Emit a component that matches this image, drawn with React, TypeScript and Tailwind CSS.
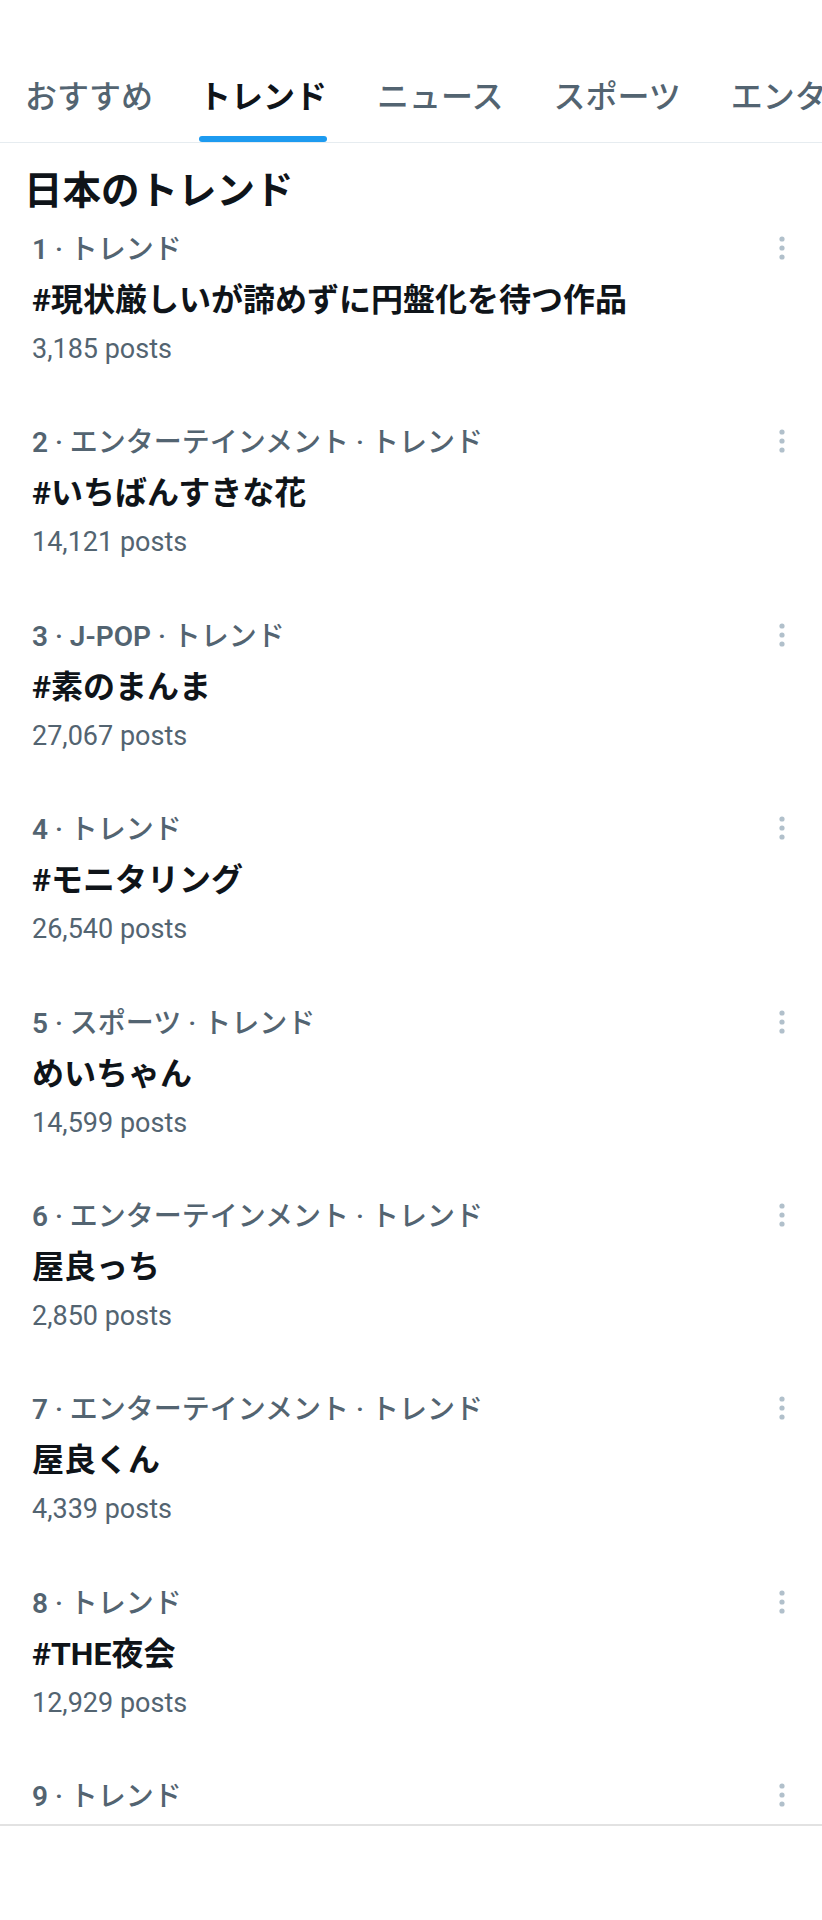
const tabs = ["おすすめ", "トレンド", "ニュース", "スポーツ", "エンターテインメント"];

const trends = [
  { rank: "1", cats: ["トレンド"], name: "#現状厳しいが諦めずに円盤化を待つ作品", posts: "3,185 posts" },
  { rank: "2", cats: ["エンターテインメント", "トレンド"], name: "#いちばんすきな花", posts: "14,121 posts" },
  { rank: "3", cats: ["J-POP", "トレンド"], name: "#素のまんま", posts: "27,067 posts" },
  { rank: "4", cats: ["トレンド"], name: "#モニタリング", posts: "26,540 posts" },
  { rank: "5", cats: ["スポーツ", "トレンド"], name: "めいちゃん", posts: "14,599 posts" },
  { rank: "6", cats: ["エンターテインメント", "トレンド"], name: "屋良っち", posts: "2,850 posts" },
  { rank: "7", cats: ["エンターテインメント", "トレンド"], name: "屋良くん", posts: "4,339 posts" },
  { rank: "8", cats: ["トレンド"], name: "#THE夜会", posts: "12,929 posts" },
  { rank: "9", cats: ["トレンド"], name: "", posts: "" },
];

const MoreIcon = () => (
  <svg width="6" height="24" viewBox="0 0 6 24" className="shrink-0">
    <circle cx="3" cy="3" r="2.6" fill="#b1c0cb" />
    <circle cx="3" cy="12" r="2.6" fill="#b1c0cb" />
    <circle cx="3" cy="21" r="2.6" fill="#b1c0cb" />
  </svg>
);

interface TrendItemProps {
  rank: string;
  cats: string[];
  name: string;
  posts: string;
}

const TrendItem = ({ rank, cats, name, posts }: TrendItemProps) => {
  return (
    <div className="shrink-0 pl-[32px] pr-[37px] pt-[17px] pb-[41.4px]">
      <div className="flex items-center justify-between h-[36px]">
        <span className="text-[28px] leading-[36px] font-medium text-[#536471] whitespace-nowrap">
          <span className="font-semibold">{rank}</span>
          {cats.map((c) => (
            <span key={c}>
              {" · "}
              <span className={c === "J-POP" ? "font-semibold" : ""}>{c}</span>
            </span>
          ))}
        </span>
        <div className="-mt-[4px]">
          <MoreIcon />
        </div>
      </div>
      {name && (
        <>
          <h3 className="mt-[7px] text-[32px] leading-[50px] font-bold text-[#0f1419] whitespace-nowrap">{name}</h3>
          <p className="mt-[6px] text-[27px] leading-[36px] text-[#536471]">{posts}</p>
        </>
      )}
    </div>
  );
};

export default function App() {
  return (
    <div
      className="w-[822px] bg-white"
      style={{ fontFamily: '"Roboto", "Noto Sans CJK JP", sans-serif' }}
    >
      <div className="h-[1824px] overflow-hidden flex flex-col">
        {/* tabs */}
        <div className="shrink-0 border-b border-[#e6ecf0] pt-[77px] overflow-hidden">
          <div className="flex gap-[50px] pl-[25px]">
            {tabs.map((t, i) => (
              <div
                key={t}
                className={i === 0 ? "flex flex-col items-stretch shrink-0 -mr-[4px]" : "flex flex-col items-stretch shrink-0"}
              >
                <span
                  className={
                    i === 1
                      ? "text-[32px] leading-[40px] font-bold text-[#0f1419] whitespace-nowrap"
                      : "text-[32px] leading-[40px] font-medium text-[#536471] whitespace-nowrap"
                  }
                >
                  {t}
                </span>
                <div
                  className={
                    i === 1
                      ? "mt-[19px] h-[6px] rounded-full bg-[#1d9bf0]"
                      : "mt-[19px] h-[6px]"
                  }
                />
              </div>
            ))}
          </div>
        </div>

        <h2 className="shrink-0 mt-[24px] pl-[24px] text-[38.5px] leading-[48px] font-bold text-[#0f1419]">
          日本のトレンド
        </h2>

        <div className="shrink-0">
          {trends.map((t) => (
            <TrendItem key={t.rank} rank={t.rank} cats={t.cats} name={t.name} posts={t.posts} />
          ))}
        </div>
      </div>
      <div className="h-[2px] bg-[#e2e2e2]" />
    </div>
  );
}
